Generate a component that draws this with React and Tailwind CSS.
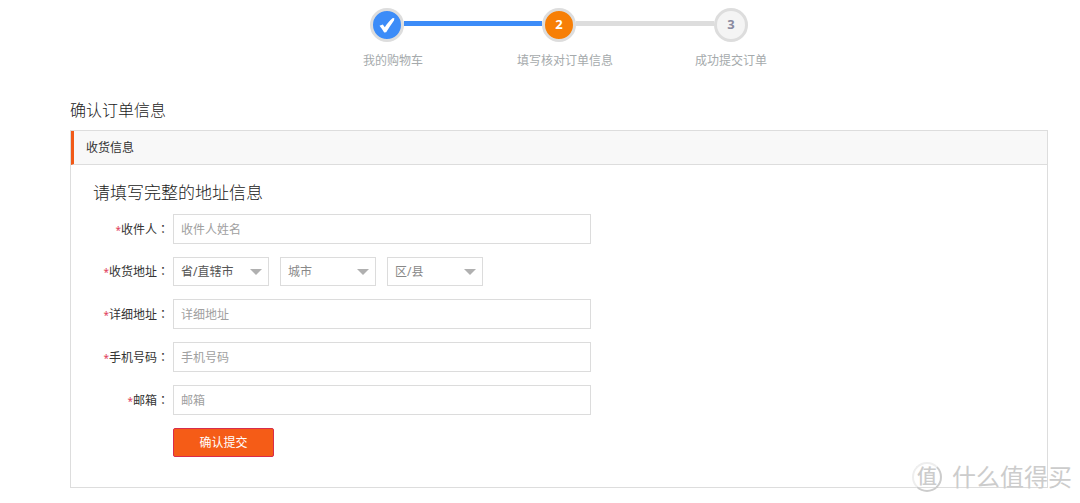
import clsx from "clsx";

const STEPS = [
  { label: "我的购物车", status: "done" },
  { label: "填写核对订单信息", status: "current" },
  { label: "成功提交订单", status: "todo" },
];

const REGION_SELECTS = [
  { id: "province", label: "省/直辖市", color: "text-[#555555]" },
  { id: "city", label: "城市", color: "text-[#888888]" },
  { id: "district", label: "区/县", color: "text-[#888888]" },
];

function CheckIcon() {
  return (
    <svg viewBox="0 0 18 18" className="size-[18px]" fill="#ffffff" aria-hidden="true">
      <path d="M1.500 9.800 4.800 8.400l2 2.800C9.200 7.600 11.600 4.600 14.800 2L16.400 2.200 16 4.400C13.200 8 10.800 12 8.200 16.200L6.200 16.400C4.800 14 3.300 11.800 1.500 9.800Z" />
    </svg>
  );
}

function Connector({ active, hidden }) {
  return (
    <span
      className={clsx(
        "mt-[13px] h-[5px] flex-1",
        hidden ? "bg-transparent" : active ? "bg-[#3c8cf8]" : "bg-[#dddddd]",
      )}
    />
  );
}

function Steps() {
  return (
    <ol className="flex justify-center">
      {STEPS.map((step, index) => (
        <li key={step.label} className="w-[172px]">
          <div className="flex items-start">
            <Connector hidden={index === 0} active={step.status !== "todo"} />
            <span
              className={clsx(
                "flex size-[34px] items-center justify-center rounded-full border-3 border-[#dddddd] font-['Noto_Sans'] text-[13px] font-bold",
                step.status === "done" && "bg-[#3c8cf8]",
                step.status === "current" && "bg-[#f77f06] text-white",
                step.status === "todo" && "bg-[#f4f4f4] text-[#8a8aa0]",
              )}
            >
              {step.status === "done" ? <CheckIcon /> : index + 1}
            </span>
            <Connector
              hidden={index === STEPS.length - 1}
              active={step.status === "done"}
            />
          </div>
          <p
            className={clsx(
              "mt-[9px] text-center leading-5 text-[#a5aaac]",
              step.status !== "todo" && "pl-3",
            )}
          >
            {step.label}
          </p>
        </li>
      ))}
    </ol>
  );
}

function FieldLabel({ htmlFor, children }) {
  return (
    <label htmlFor={htmlFor} className="w-[76px] shrink-0 text-right">
      <span className="font-['Noto_Sans'] text-[10px] text-[#e0405a]">*</span>
      {children}
      <span className="font-['Noto_Sans_CJK_TC',sans-serif]">：</span>
    </label>
  );
}

function TextField({ id, label, placeholder, type = "text" }) {
  return (
    <div className="flex items-center gap-1">
      <FieldLabel htmlFor={id}>{label}</FieldLabel>
      <input
        id={id}
        type={type}
        placeholder={placeholder}
        className="h-[30px] w-full max-w-[418px] border border-[#dcdcdc] bg-white px-[7px] placeholder:text-[#a0a0a0]"
      />
    </div>
  );
}

function RegionSelect({ id, label, color }) {
  return (
    <span className="grid w-24 items-center">
      <select
        id={id}
        aria-label={label}
        className={clsx(
          "col-start-1 row-start-1 h-[29px] w-full appearance-none border border-[#dcdcdc] bg-white px-[7px]",
          color,
        )}
      >
        <option>{label}</option>
      </select>
      <svg
        viewBox="0 0 12 6"
        className="pointer-events-none col-start-1 row-start-1 mr-[7px] h-[6px] w-3 justify-self-end"
        fill="#b0b0b0"
        aria-hidden="true"
      >
        <path d="M0 0h12L6 6Z" />
      </svg>
    </span>
  );
}

function Watermark() {
  return (
    <div className="pointer-events-none absolute right-2 bottom-[10px] flex items-center gap-[10px] text-[#cccccc]">
      <span className="flex size-[30px] items-center justify-center rounded-full border-2 border-t-[#eeeeee] border-r-[#cccccc] border-b-[#cccccc] border-l-[#eeeeee] text-[20px] font-medium">
        值
      </span>
      <span className="text-[24px] leading-8">什么值得买</span>
    </div>
  );
}

function App() {
  return (
    <div className="relative bg-white pt-2 pr-8 pb-[15px] pl-[70px] font-['Noto_Sans','Noto_Sans_CJK_SC',sans-serif] text-[12px] text-[#333333]">
      <Steps />

      <h1 className="mt-[27px] text-[16px] leading-6 font-light text-[#222222]">
        确认订单信息
      </h1>

      <section className="mt-2 border border-[#dddddd]">
        <h2 className="border-b border-l-3 border-b-[#dddddd] border-l-[#f15a18] bg-[#f8f8f8] pl-3 leading-[33px]">
          收货信息
        </h2>

        <form
          className="px-[22px] pt-4 pb-[30px]"
          onSubmit={(e) => e.preventDefault()}
        >
          <h3 className="text-[17px] leading-6 font-light text-[#222222]">
            请填写完整的地址信息
          </h3>

          <div className="mt-[9px] flex flex-col gap-[13px]">
            <TextField id="name" label="收件人" placeholder="收件人姓名" />

            <div className="flex items-center gap-1">
              <FieldLabel htmlFor="province">收货地址</FieldLabel>
              <div className="flex gap-[11px]">
                {REGION_SELECTS.map((region) => (
                  <RegionSelect key={region.id} {...region} />
                ))}
              </div>
            </div>

            <TextField id="address" label="详细地址" placeholder="详细地址" />
            <TextField
              id="phone"
              type="tel"
              label="手机号码"
              placeholder="手机号码"
            />
            <TextField id="email" type="email" label="邮箱" placeholder="邮箱" />

            <button
              type="submit"
              className="ml-20 h-[29px] w-[101px] rounded-xs border border-[#d82c4c] bg-[#f55c17] text-white"
            >
              确认提交
            </button>
          </div>
        </form>
      </section>

      <Watermark />
    </div>
  );
}

export default App;
